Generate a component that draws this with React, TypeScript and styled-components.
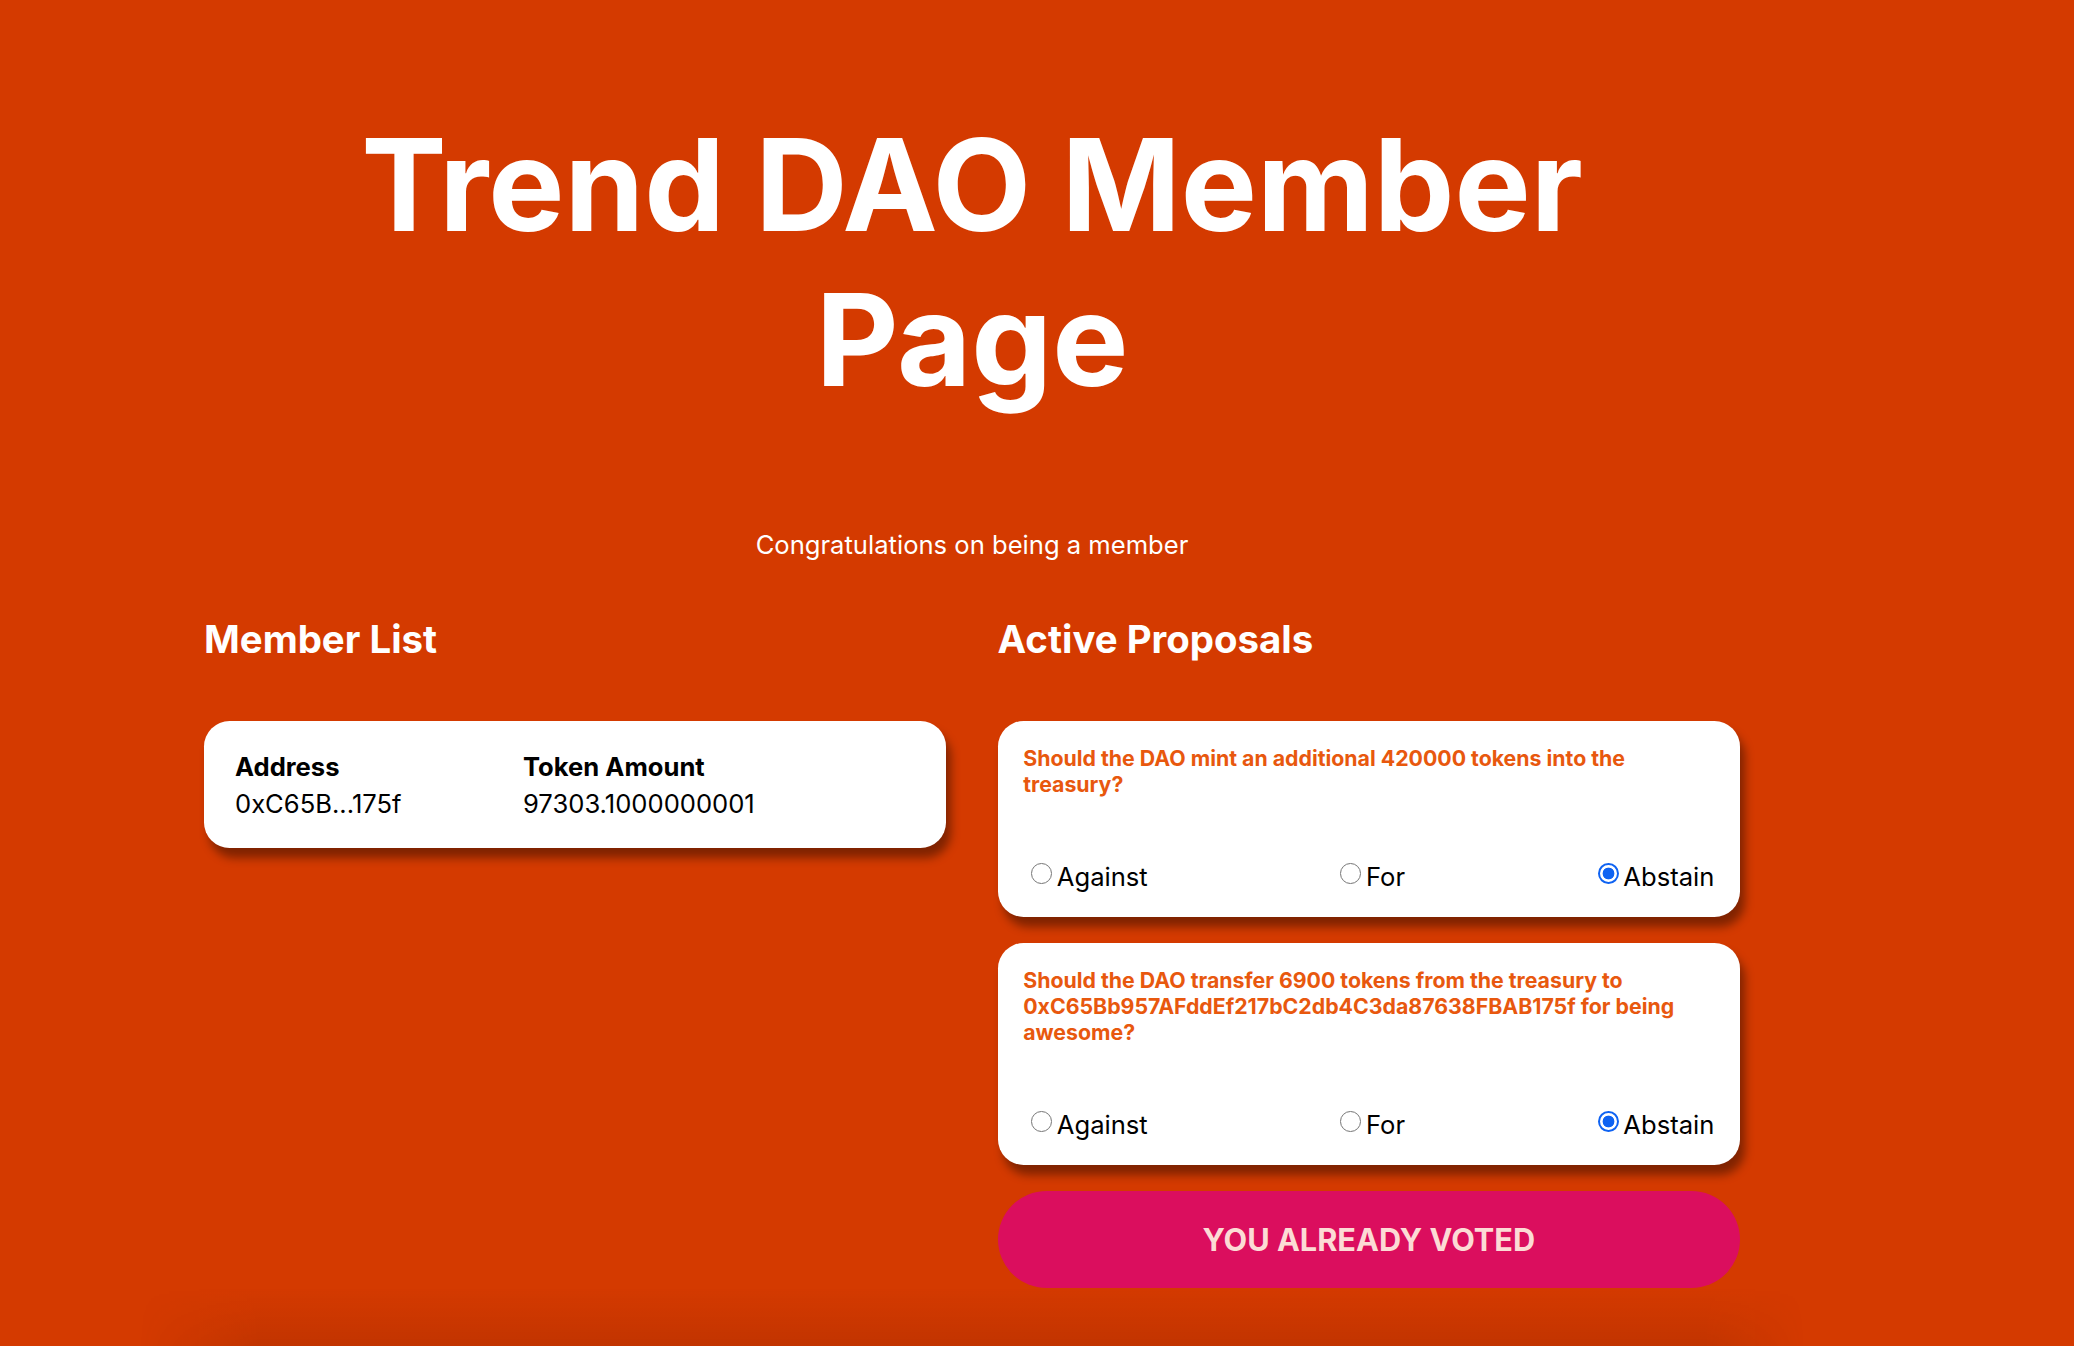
import React, { useState } from "react";
import styled, { createGlobalStyle } from "styled-components";

const GlobalStyle = createGlobalStyle`
  html, body {
    margin: 0;
    padding: 0;
    overflow: hidden;
    background: #d43a00;
  }
  body {
    font-family: Inter, "Noto Sans", "Liberation Sans", sans-serif;
    color: #ffffff;
    -webkit-font-smoothing: antialiased;
  }
  * { box-sizing: border-box; }
`;

const Page = styled.main`
  width: 1536px;
  margin-left: 204px;
  padding-top: 107px;
  display: flex;
  flex-direction: column;
`;

const Title = styled.h1`
  margin: 0;
  font-size: 128px;
  line-height: 155px;
  font-weight: 700;
  text-align: center;
`;

const Subtitle = styled.p`
  margin: 112px 0 0;
  font-size: 25.6px;
  line-height: 31px;
  font-weight: 400;
  text-align: center;
`;

const Columns = styled.div`
  display: grid;
  grid-template-columns: 1fr 1fr;
  column-gap: 51.2px;
  margin-top: 56px;
  align-items: start;
`;

const Column = styled.section`
  display: flex;
  flex-direction: column;
`;

const Heading = styled.h2`
  margin: 0 0 58px;
  font-size: 38.4px;
  line-height: 46.5px;
  font-weight: 700;
`;

const Card = styled.div`
  background: #ffffff;
  border-radius: 25.6px;
  box-shadow: 5px 10px 10px rgba(0, 0, 0, 0.4);
  color: #000000;
`;

const MemberTable = styled(Card)`
  display: grid;
  grid-template-columns: 288px 1fr;
  row-gap: 6px;
  padding: 30px 31px 29px;
  font-size: 25.6px;
  line-height: 31px;
`;

const Cell = styled.div<{ $head?: boolean }>`
  font-weight: ${(p) => (p.$head ? 700 : 400)};
  white-space: nowrap;
`;

const Form = styled.form`
  display: flex;
  flex-direction: column;
  gap: 25.6px;
`;

const ProposalCard = styled(Card)`
  padding: 25.6px;
  display: flex;
  flex-direction: column;
  gap: 63px;
`;

const Question = styled.h5`
  margin: 0;
  font-size: 21.3px;
  line-height: 25.8px;
  font-weight: 700;
  color: #e8580e;
`;

const Options = styled.div`
  display: flex;
  justify-content: space-between;
  align-items: flex-start;
`;

const Option = styled.label`
  display: flex;
  align-items: flex-start;
  font-size: 25.6px;
  line-height: 31px;
  color: #000000;
  cursor: pointer;
`;

const Radio = styled.input`
  appearance: none;
  -webkit-appearance: none;
  width: 20.8px;
  height: 20.8px;
  margin: 2.6px 4.8px 0 8px;
  border-radius: 50%;
  border: 1.6px solid #767676;
  background: #ffffff;
  flex: none;

  &:checked {
    border: 2.2px solid #0f63f2;
    background: radial-gradient(circle, #0f63f2 0 5.6px, #ffffff 6.2px);
  }
`;

const VoteButton = styled.button`
  width: 100%;
  border: none;
  border-radius: 77px;
  padding: 30.7px 32px;
  background: #db0e5e;
  color: #fcdbd5;
  font-family: inherit;
  font-weight: 700;
  font-size: 30.7px;
  line-height: 36px;
  text-transform: uppercase;
  cursor: not-allowed;
`;

const FoldShade = styled.div`
  height: 58px;
  margin: 0 -65px;
  background: linear-gradient(to bottom, rgba(60, 10, 0, 0) 0%, rgba(60, 10, 0, 0.04) 40%, rgba(60, 10, 0, 0.12) 100%);
  -webkit-mask-image: linear-gradient(to right, transparent 0, #000 120px, #000 calc(100% - 100px), transparent 100%);
  mask-image: linear-gradient(to right, transparent 0, #000 120px, #000 calc(100% - 100px), transparent 100%);
`;

type Proposal = { id: string; text: string };

const proposals: Proposal[] = [
  { id: "p1", text: "Should the DAO mint an additional 420000 tokens into the treasury?" },
  {
    id: "p2",
    text: "Should the DAO transfer 6900 tokens from the treasury to 0xC65Bb957AFddEf217bC2db4C3da87638FBAB175f for being awesome?",
  },
];

const choices = ["Against", "For", "Abstain"];

export default function App() {
  const [votes, setVotes] = useState<Record<string, string>>({ p1: "Abstain", p2: "Abstain" });

  return (
    <>
      <GlobalStyle />
      <Page>
        <Title>Trend DAO Member Page</Title>
        <Subtitle>Congratulations on being a member</Subtitle>
        <Columns>
          <Column>
            <Heading>Member List</Heading>
            <MemberTable>
              <Cell $head>Address</Cell>
              <Cell $head>Token Amount</Cell>
              <Cell>0xC65B...175f</Cell>
              <Cell>97303.1000000001</Cell>
            </MemberTable>
          </Column>
          <Column>
            <Heading>Active Proposals</Heading>
            <Form onSubmit={(e) => e.preventDefault()}>
              {proposals.map((p) => (
                <ProposalCard key={p.id}>
                  <Question>{p.text}</Question>
                  <Options>
                    {choices.map((c) => (
                      <Option key={c}>
                        <Radio
                          type="radio"
                          name={p.id}
                          value={c}
                          checked={votes[p.id] === c}
                          onChange={() => setVotes({ ...votes, [p.id]: c })}
                        />
                        {c}
                      </Option>
                    ))}
                  </Options>
                </ProposalCard>
              ))}
              <VoteButton type="submit" disabled>
                You already voted
              </VoteButton>
            </Form>
          </Column>
        </Columns>
        <FoldShade />
      </Page>
    </>
  );
}
